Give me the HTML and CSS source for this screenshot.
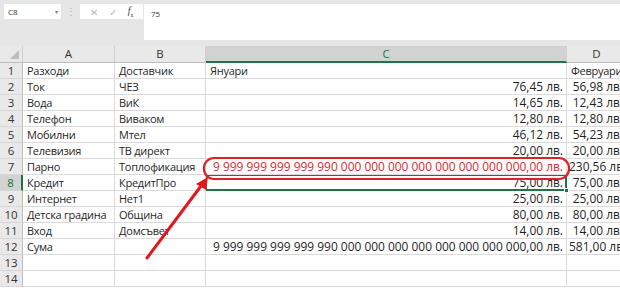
FILE: index.html
```html
<!DOCTYPE html>
<html lang="bg">
<head>
<meta charset="utf-8">
<link rel="stylesheet" href="styles.css">
</head>
<body>
<div class="app">
  <div class="fbar">
    <div class="namebox"><span>C8</span><span class="dd">▾</span></div>
    <div class="grip">⋮</div>
    <div class="btns">
      <span class="b x">✕</span>
      <span class="b ok">✓</span>
      <span class="b fx"><i>f</i><sub>x</sub></span>
    </div>
    <div class="formula">75</div>
  </div>
  <div class="sheet">
    <div class="grid">
      <div class="corner"><span class="tri"></span></div>
      <div class="ch">A</div>
      <div class="ch">B</div>
      <div class="ch sel">C</div>
      <div class="ch">D</div>

      <div class="rh">1</div><div class="c">Разходи</div><div class="c">Доставчик</div><div class="c">Януари</div><div class="c">Февруари</div>
      <div class="rh">2</div><div class="c">Ток</div><div class="c">ЧЕЗ</div><div class="c n">76,45 лв.</div><div class="c n">56,98 лв.</div>
      <div class="rh">3</div><div class="c">Вода</div><div class="c">ВиК</div><div class="c n">14,65 лв.</div><div class="c n">12,43 лв.</div>
      <div class="rh">4</div><div class="c">Телефон</div><div class="c">Виваком</div><div class="c n">12,80 лв.</div><div class="c n">12,80 лв.</div>
      <div class="rh">5</div><div class="c">Мобилни</div><div class="c">Мтел</div><div class="c n">46,12 лв.</div><div class="c n">54,23 лв.</div>
      <div class="rh">6</div><div class="c">Телевизия</div><div class="c">ТВ директ</div><div class="c n">20,00 лв.</div><div class="c n">20,00 лв.</div>
      <div class="rh">7</div><div class="c">Парно</div><div class="c">Топлофикация</div><div class="c n red">9 999 999 999 999 990 000 000 000 000 000 000 000 000,00 лв.</div><div class="c n">230,56 лв.</div>
      <div class="rh rsel">8</div><div class="c">Кредит</div><div class="c">КредитПро</div><div class="c n active">75,00 лв.<span class="handle"></span></div><div class="c n">75,00 лв.</div>
      <div class="rh">9</div><div class="c">Интернет</div><div class="c">Нет1</div><div class="c n">25,00 лв.</div><div class="c n">25,00 лв.</div>
      <div class="rh">10</div><div class="c">Детска градина</div><div class="c">Община</div><div class="c n">80,00 лв.</div><div class="c n">80,00 лв.</div>
      <div class="rh">11</div><div class="c">Вход</div><div class="c">Домсъвет</div><div class="c n">14,00 лв.</div><div class="c n">14,00 лв.</div>
      <div class="rh">12</div><div class="c">Сума</div><div class="c"></div><div class="c n">9 999 999 999 999 990 000 000 000 000 000 000 000 000,00 лв.</div><div class="c n">581,00 лв.</div>
      <div class="rh">13</div><div class="c"></div><div class="c"></div><div class="c"></div><div class="c"></div>
      <div class="rh">14</div><div class="c"></div><div class="c"></div><div class="c"></div><div class="c"></div>
    </div>
    <svg class="markup" width="620" height="245" viewBox="0 45 620 245">
      <rect x="204" y="157" width="365" height="21" rx="10" ry="10" fill="none" stroke="#dc2128" stroke-width="2.2"/>
      <line x1="147" y1="257" x2="201" y2="185" stroke="#e3161d" stroke-width="3" stroke-linecap="round"/>
      <polygon points="208,176 196,183 206,189" fill="#e3161d"/>
    </svg>
  </div>
</div>
</body>
</html>
```
FILE: styles.css
```css
* { box-sizing: border-box; }
html, body { margin: 0; padding: 0; }
body {
  width: 620px;
  height: 290px;
  overflow: hidden;
  background: #fff;
  font-family: "Open Sans", "Liberation Sans", sans-serif;
}
.app { width: 620px; height: 290px; display: flex; flex-direction: column; }

.fbar {
  height: 46px;
  background: #e6e6e6;
  display: flex;
  align-items: flex-start;
  padding: 4px 0 0 4px;
  flex: none;
}
.namebox {
  width: 57px;
  height: 15px;
  background: #fff;
  display: flex;
  align-items: center;
  justify-content: space-between;
  padding: 0 3px 0 4px;
  font-size: 8px;
  color: #333;
}
.namebox .dd { font-size: 6px; color: #777; }
.grip {
  width: 19px;
  text-align: center;
  color: #b0b0b0;
  font-size: 10px;
  line-height: 15px;
}
.btns {
  width: 63px;
  height: 15px;
  background: #fff;
  display: flex;
  align-items: center;
  justify-content: space-around;
  padding: 0 4px;
  color: #b9b9b9;
  font-size: 10px;
}
.btns .fx { color: #444; font-family: "Liberation Serif", serif; font-size: 10px; }
.btns .fx sub { font-size: 6px; }
.formula {
  flex: 1;
  height: 36px;
  margin-left: 1px;
  background: #fff;
  font-size: 8px;
  color: #333;
  padding: 4px 0 0 7px;
}

.sheet { position: relative; flex: 1; }
.grid {
  display: grid;
  grid-template-columns: 23px 92px 91px 361px 60px;
  grid-template-rows: 17px repeat(14, 16px);
  color: #1f1f1f;
  line-height: 15px;
}
.corner {
  background: #e9e9e9;
  border-right: 1px solid #cfcfcf;
  border-bottom: 1px solid #bdbdbd;
  position: relative;
}
.tri {
  position: absolute;
  right: 3px;
  bottom: 3px;
  width: 0;
  height: 0;
  border-left: 9px solid transparent;
  border-bottom: 9px solid #bdbdbd;
}
.ch {
  background: #e9e9e9;
  border-right: 1px solid #d0d0d0;
  border-bottom: 1px solid #bdbdbd;
  text-align: center;
  color: #333;
  font-size: 11.5px;
  line-height: 16px;
}
.ch.sel {
  background: #d2d2d2;
  color: #217346;
  border-bottom: 2px solid #217346;
}
.rh {
  background: #e9e9e9;
  border-right: 1px solid #bdbdbd;
  border-bottom: 1px solid #d6d6d6;
  text-align: center;
  color: #333;
  font-size: 11.5px;
}
.rh.rsel {
  background: #d2d2d2;
  color: #217346;
  border-right: 2px solid #217346;
}
.c {
  border-right: 1px solid #dadada;
  border-bottom: 1px solid #dadada;
  padding: 0 3px 0 4px;
  white-space: nowrap;
  overflow: hidden;
  font-size: 11px;
  letter-spacing: -0.25px;
}
.c.n {
  text-align: right;
  font-size: 11.95px;
  letter-spacing: 0;
  padding: 0 3px 0 2px;
}
.c.red { color: #d42a2f; }
.c.active {
  position: relative;
  overflow: visible;
  box-shadow: 0 0 0 1px #217346 inset;
  border-bottom: 1px solid #217346;
  border-right: 1px solid #217346;
}
.handle {
  position: absolute;
  right: -3px;
  bottom: -3px;
  width: 5px;
  height: 5px;
  background: #217346;
  border: 1px solid #fff;
}
.markup {
  position: absolute;
  left: 0;
  top: 0;
  pointer-events: none;
}
```
